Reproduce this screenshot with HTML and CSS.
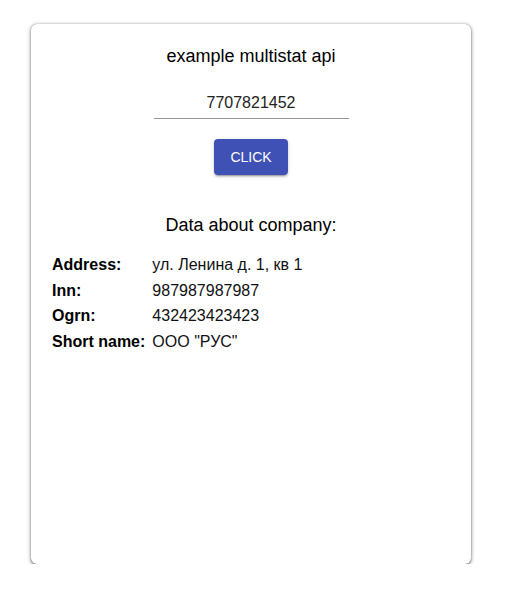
FILE: index.html
```html
<!DOCTYPE html>
<html lang="en">
<head>
<meta charset="utf-8">
<title>example multistat api</title>
<link rel="stylesheet" href="styles.css">
</head>
<body>
<div class="card">
  <h1 class="title">example multistat api</h1>
  <div class="field">
    <input class="inn-input" type="text" value="7707821452">
  </div>
  <button class="btn" type="button">Click</button>
  <h2 class="subtitle">Data about company:</h2>
  <div class="info">
    <div class="label">Address:</div><div class="value">ул. Ленина д. 1, кв 1</div>
    <div class="label">Inn:</div><div class="value">987987987987</div>
    <div class="label">Ogrn:</div><div class="value">432423423423</div>
    <div class="label">Short name:</div><div class="value">ООО "РУС"</div>
  </div>
</div>
</body>
</html>
```

FILE: styles.css
```css
html, body {
  margin: 0;
  padding: 0;
  background: #ffffff;
}
body {
  padding: 24px 0 0 31px;
  font-family: "Liberation Sans", Arial, sans-serif;
  color: #000000;
}
.card {
  box-sizing: border-box;
  width: 440px;
  height: 540px;
  background: #ffffff;
  border-radius: 6px;
  box-shadow: 0 1px 4px rgba(0,0,0,0.45), 0 2px 2px rgba(0,0,0,0.22), 0 0 1px rgba(0,0,0,0.4);
  padding: 20px 20px 0 20px;
  display: flex;
  flex-direction: column;
  align-items: center;
}
.title {
  margin: 0;
  font-size: 18px;
  font-weight: normal;
  line-height: 24px;
  height: 24px;
}
.field {
  margin-top: 18px;
  width: 195px;
}
.inn-input {
  box-sizing: content-box;
  display: block;
  width: 100%;
  margin: 0;
  padding: 7px 0 6px 0;
  height: 19px;
  line-height: 19px;
  border: 0;
  border-bottom: 1px solid #949494;
  outline: none;
  background: transparent;
  font-family: "Liberation Sans", Arial, sans-serif;
  font-size: 16px;
  color: #222222;
  text-align: center;
}
.btn {
  margin-top: 20px;
  box-sizing: border-box;
  height: 36px;
  min-width: 64px;
  padding: 0 16px;
  border: 0;
  border-radius: 4px;
  background: #3f51b5;
  color: #ffffff;
  font-family: "Liberation Sans", Arial, sans-serif;
  font-size: 14px;
  text-transform: uppercase;
  box-shadow: 0 3px 1px -2px rgba(0,0,0,0.2), 0 2px 2px 0 rgba(0,0,0,0.14), 0 1px 5px 0 rgba(0,0,0,0.12);
}
.subtitle {
  margin: 38px 0 0 0;
  font-size: 18px;
  font-weight: normal;
  line-height: 24px;
}
.info {
  align-self: flex-start;
  margin: 15px 0 0 1px;
  display: grid;
  grid-template-columns: auto auto;
  column-gap: 7px;
  font-size: 16px;
  line-height: 25.7px;
}
.label {
  font-weight: bold;
}
.value {
  color: #111111;
}
```
